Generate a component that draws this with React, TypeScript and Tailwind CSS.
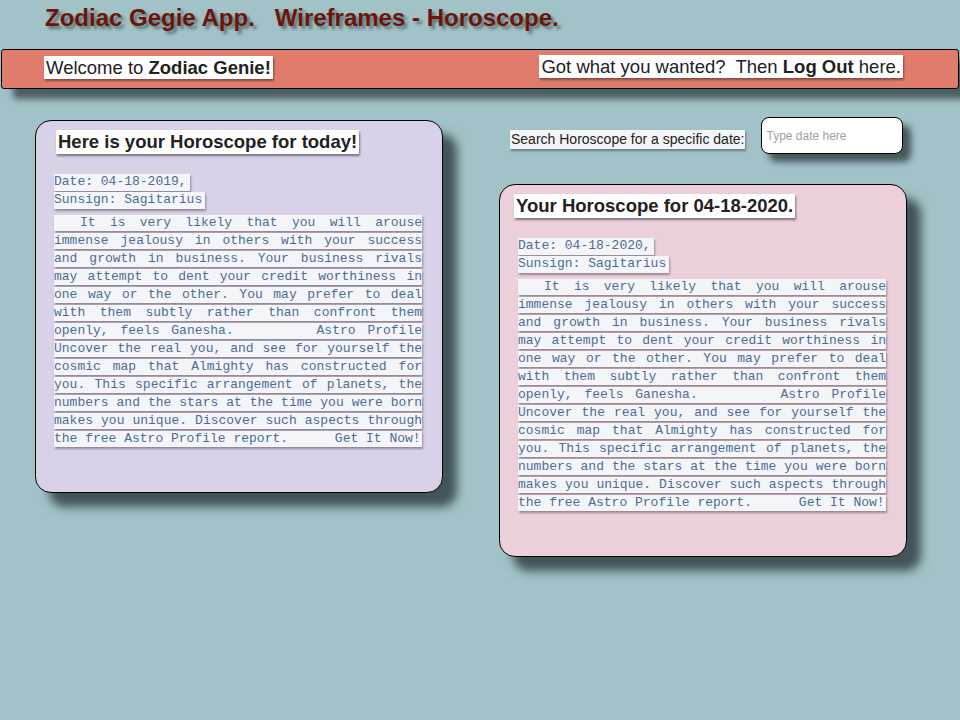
import React from "react";

const NB = "\u00a0";

const para = [
  "It is very likely that you will arouse",
  "immense jealousy in others with your success",
  "and growth in business. Your business rivals",
  "may attempt to dent your credit worthiness in",
  "one way or the other. You may prefer to deal",
  "with them subtly rather than confront them",
  `openly, feels Ganesha. ${NB.repeat(6)}Astro Profile`,
  "Uncover the real you, and see for yourself the",
  "cosmic map that Almighty has constructed for",
  "you. This specific arrangement of planets, the",
  "numbers and the stars at the time you were born",
  "makes you unique. Discover such aspects through",
];
const lastLine = `the free Astro Profile report.${NB.repeat(6)}Get It Now!`;

const mono = "font-['Liberation_Mono','DejaVu_Sans_Mono',monospace] text-[13px] leading-[16px] text-[#4f6b94]";

function Horoscope({
  title,
  date,
  tint,
  headShift,
}: {
  title: string;
  date: string;
  tint: string;
  headShift: string;
}) {
  return (
    <div
      className={`w-[408px] rounded-[16px] border border-black px-[18px] pt-[9px] pb-[43px] shadow-[14px_14px_10px_rgba(60,78,82,0.95)] ${tint}`}
    >
      <h2
        className={`inline-block bg-white px-[2px] text-[18.5px] leading-[24px] font-bold text-[#222] shadow-[1px_2px_2px_rgba(0,0,0,0.45)] ${headShift}`}
      >
        {title}
      </h2>
      <div className={`mt-[19px] ${mono}`}>
        <div className="inline-block bg-[#f3f5f9] pr-[3px] pb-[1px] shadow-[1px_2px_2px_rgba(0,0,0,0.35)]">
          Date: {date},
        </div>
        <br />
        <div className="mt-[1px] inline-block bg-[#f3f5f9] pr-[3px] pb-[1px] shadow-[1px_2px_2px_rgba(0,0,0,0.35)]">
          Sunsign: Sagitarius
        </div>
        <div className="mt-[6px] w-[368px]">
          {para.map((l, i) => (
            <div
              key={i}
              className={`mb-[2px] h-[16px] bg-[#f3f5f9] text-justify [text-align-last:justify] shadow-[1px_2px_2px_rgba(0,0,0,0.35)] whitespace-nowrap ${
                i === 0 ? "indent-[26px]" : ""
              }`}
            >
              {l}
            </div>
          ))}
          <div className="mb-[2px] h-[16px] bg-[#f3f5f9] shadow-[1px_2px_2px_rgba(0,0,0,0.35)] whitespace-nowrap">
            {lastLine}
          </div>
        </div>
      </div>
    </div>
  );
}

export default function App() {
  return (
    <div className="min-h-[720px] w-[960px] bg-[#a1c2c6] font-['Liberation_Sans',Arial,sans-serif] text-[#222]">
      <h1 className="pl-[45px] pt-[3px] text-[24px] leading-[30px] font-bold text-[#6b150a] [text-shadow:3px_3px_3px_rgba(40,50,55,0.55)] whitespace-pre">
        {"Zodiac Gegie App.   Wireframes - Horoscope."}
      </h1>
      <div className="mx-[1px] mt-[16px] flex h-[40px] items-start justify-between rounded-[3px] border border-black bg-[#e07c6b] pl-[42px] pr-[55px] pt-[6px] shadow-[12px_10px_6px_rgba(70,90,94,0.95)]">
        <span className="bg-white px-[2px] text-[18.5px] leading-[23px] shadow-[1px_2px_2px_rgba(0,0,0,0.4)]">
          Welcome to <b>Zodiac Genie!</b>
        </span>
        <span className="-mt-[1px] bg-white px-[2px] text-[18.5px] leading-[23px] shadow-[1px_2px_2px_rgba(0,0,0,0.4)] whitespace-pre">
          {"Got what you wanted?  Then "}
          <b>Log Out</b> here.
        </span>
      </div>
      <div className="flex items-start pt-[29px]">
        <div className="ml-[35px] mt-[2px]">
          <Horoscope
            title="Here is your Horoscope for today!"
            date="04-18-2019"
            tint="bg-[#d9d1e8]"
            headShift="ml-[2px]"
          />
        </div>
        <div className="ml-[56px] flex flex-col">
          <div className="flex items-start">
            <span className="ml-[11px] mt-[12px] bg-[#f3f5f9] px-[1px] text-[14px] leading-[19px] shadow-[1px_2px_2px_rgba(0,0,0,0.35)]">
              Search Horoscope for a specific date:
            </span>
            <input
              placeholder="Type date here"
              className="ml-[16px] -mt-[1px] h-[37px] w-[142px] rounded-[8px] border border-black bg-white px-[4px] pt-[1px] text-[12px] text-[#333] placeholder:text-[#a0a0a0] shadow-[8px_8px_6px_rgba(60,78,82,0.9)] outline-none"
            />
          </div>
          <div className="mt-[30px]">
            <Horoscope
              title="Your Horoscope for 04-18-2020."
              date="04-18-2020"
              tint="bg-[#ebd0dc]"
              headShift="-ml-[4px]"
            />
          </div>
        </div>
      </div>
    </div>
  );
}
